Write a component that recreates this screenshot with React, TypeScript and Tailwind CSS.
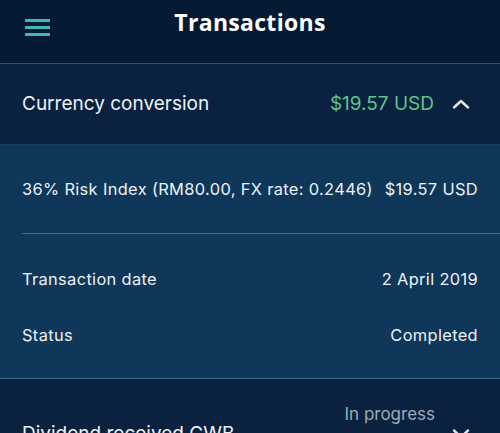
import React from 'react';

const font = { fontFamily: 'Inter, Roboto, "Noto Sans", sans-serif' };

const Chevron = ({ up }: { up?: boolean }) => (
  <svg width="18" height="12" viewBox="0 0 18 12" fill="none" stroke="#e5e9ee" strokeWidth={2.4} strokeLinecap="round" strokeLinejoin="round">
    {up ? <path d="M2 9.5 L9 3 L16 9.5" /> : <path d="M2 2.5 L9 9 L16 2.5" />}
  </svg>
);

export default function App() {
  return (
    <div className="w-[500px] h-[433px] overflow-hidden bg-[#0a2140] text-[#eef2f6]" style={font}>
      {/* Header */}
      <div className="h-16 bg-[#061a33] border-b border-[#1c5a82] flex items-start relative">
        <div className="absolute left-[25px] top-[19px] flex flex-col gap-[4px]">
          <span className="block w-[25px] h-[3px] bg-[#3fb7b2]" />
          <span className="block w-[25px] h-[3px] bg-[#3fb7b2]" />
          <span className="block w-[25px] h-[3px] bg-[#3fb7b2]" />
        </div>
        <h1 className="w-full text-center pt-[5px] text-[23px] font-bold text-white tracking-[0.3px]" style={{ fontFamily: '"Open Sans", Lato, sans-serif' }}>
          Transactions
        </h1>
      </div>

      {/* Currency conversion row */}
      <div className="h-[80px] flex items-center pl-[22px] pr-[30px]">
        <span className="flex-1 text-[19px]">Currency conversion</span>
        <span className="text-[19px] text-[#5fc48b] mr-[18px]">$19.57 USD</span>
        <Chevron up />
      </div>

      {/* Expanded details */}
      <div className="bg-[#0e3759] border-t border-[#113f66] border-b border-b-[#3d6a8c]">
        <div className="h-[88px] flex items-center justify-between px-[22px] text-[16.4px] tracking-[0.35px]">
          <span>36% Risk Index (RM80.00, FX rate: 0.2446)</span>
          <span>$19.57 USD</span>
        </div>
        <div className="ml-[22px] h-px bg-[#3a6a8e]" />
        <div className="pt-[17px] pb-[15px] text-[16.4px] tracking-[0.35px]">
          <div className="h-[56px] flex items-center justify-between px-[22px]">
            <span>Transaction date</span>
            <span>2 April 2019</span>
          </div>
          <div className="h-[56px] flex items-center justify-between px-[22px]">
            <span>Status</span>
            <span>Completed</span>
          </div>
        </div>
      </div>

      {/* Dividend row */}
      <div className="relative h-[80px] pl-[22px] pr-[30px]">
        <span className="absolute right-[65px] top-[23px] text-[17px] text-[#9eabb9]">In progress</span>
        <div className="flex items-center pt-[41px]">
          <span className="flex-1 text-[19px]">Dividend received CWB</span>
          <Chevron />
        </div>
      </div>
    </div>
  );
}
